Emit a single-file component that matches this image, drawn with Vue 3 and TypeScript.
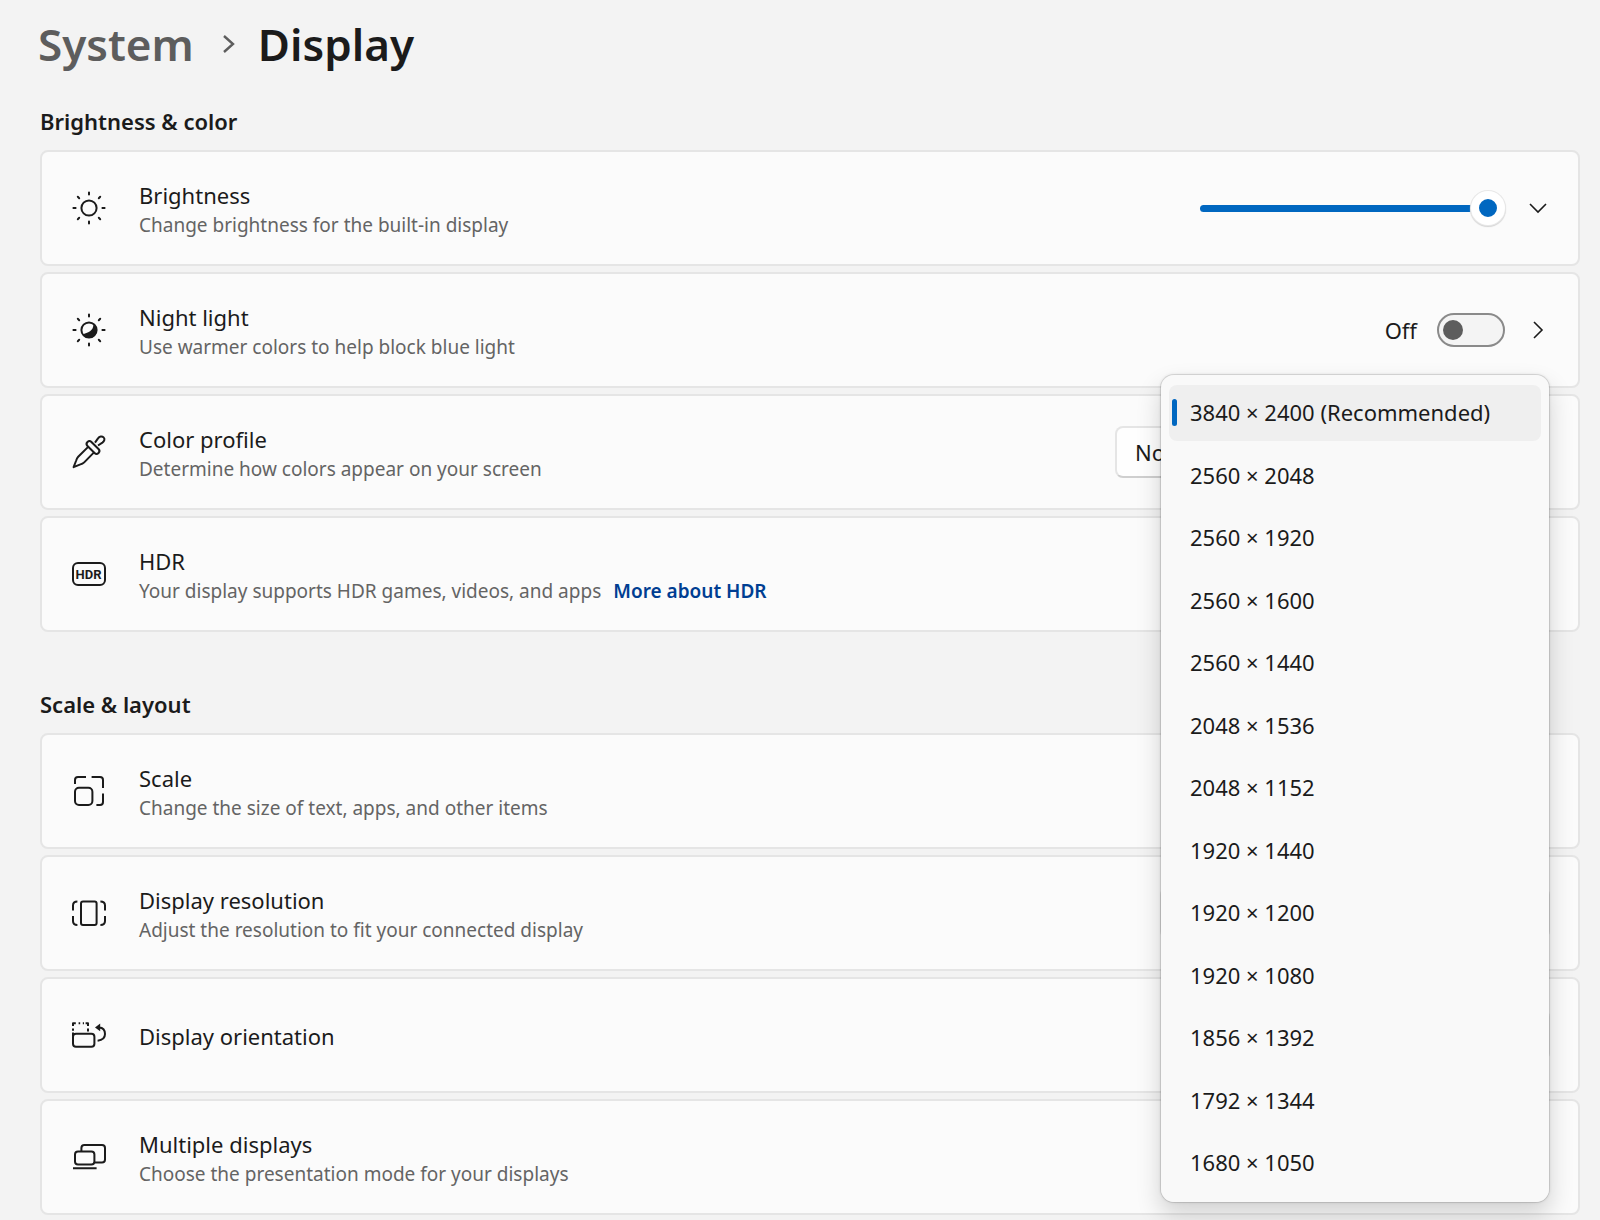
<script setup lang="ts">
import { ref } from 'vue'

type IconName = 'sun' | 'night' | 'picker' | 'hdr' | 'scale' | 'resolution' | 'orientation' | 'displays'

interface Row {
  id: string
  icon: IconName
  title: string
  text?: string
  link?: string
}

interface Section {
  title: string
  rows: Row[]
}

const sections: Section[] = [
  {
    title: 'Brightness & color',
    rows: [
      { id: 'brightness', icon: 'sun', title: 'Brightness', text: 'Change brightness for the built-in display' },
      { id: 'night', icon: 'night', title: 'Night light', text: 'Use warmer colors to help block blue light' },
      { id: 'profile', icon: 'picker', title: 'Color profile', text: 'Determine how colors appear on your screen' },
      { id: 'hdr', icon: 'hdr', title: 'HDR', text: 'Your display supports HDR games, videos, and apps', link: 'More about HDR' },
    ],
  },
  {
    title: 'Scale & layout',
    rows: [
      { id: 'scale', icon: 'scale', title: 'Scale', text: 'Change the size of text, apps, and other items' },
      { id: 'resolution', icon: 'resolution', title: 'Display resolution', text: 'Adjust the resolution to fit your connected display' },
      { id: 'orientation', icon: 'orientation', title: 'Display orientation' },
      { id: 'displays', icon: 'displays', title: 'Multiple displays', text: 'Choose the presentation mode for your displays' },
    ],
  },
]

const resolutions: string[] = [
  '3840 × 2400 (Recommended)',
  '2560 × 2048',
  '2560 × 1920',
  '2560 × 1600',
  '2560 × 1440',
  '2048 × 1536',
  '2048 × 1152',
  '1920 × 1440',
  '1920 × 1200',
  '1920 × 1080',
  '1856 × 1392',
  '1792 × 1344',
  '1680 × 1050',
]

const brightness = ref(100)
const nightLight = ref(false)
const resolution = ref(resolutions[0])
</script>

<template>
  <main class="page">
    <h1 class="crumbs">
      <a class="crumb-parent" href="#system">System</a>
      <svg class="crumb-sep" viewBox="0 0 14 20" aria-hidden="true"><path d="M2 2l9 8-9 8" /></svg>
      <span>Display</span>
    </h1>

    <section v-for="section in sections" :key="section.title" class="section">
      <h2 class="section-title">{{ section.title }}</h2>
      <div class="cards">
        <div v-for="row in section.rows" :key="row.id" class="card">
          <svg class="icon" viewBox="0 0 34 34" aria-hidden="true">
            <template v-if="row.icon === 'sun' || row.icon === 'night'">
              <circle cx="17" cy="17" r="7.6" />
              <path
                class="rays"
                d="M17 1.400v2.200M17 30.400v2.200M1.400 17h2.200M30.400 17h2.200M5.800 5.800l1.400 1.400M26.800 26.800l1.400 1.400M5.800 28.200l1.400-1.400M26.800 7.200l1.400-1.400"
              />
              <path
                v-if="row.icon === 'night'"
                class="solid"
                d="M21.4 10.6C21.6 14.4 20.4 16.8 18 18.2C15.8 19.6 13 20.6 10.6 21.4A7.8 7.8 0 1 0 21.4 10.6z"
              />
            </template>
            <template v-else-if="row.icon === 'picker'">
              <path d="M16.4 11.6L6.2 21.8C5 23 4.6 24 4 26L1.6 32.2L7.8 29.6C10 29 11 28.6 12.2 27.4L22 17.4" />
              <rect x="-7.8" y="-2.8" width="15.6" height="5.6" rx="2.8" transform="translate(21 12.5) rotate(45)" />
              <path d="M23 7.6L26 3.4C27.4 1.2 30 .8 31.6 2.4S32.4 6.2 30.4 7.6L26 10.5" />
            </template>
            <template v-else-if="row.icon === 'hdr'">
              <rect x="1" y="6" width="32" height="22" rx="5" />
              <text class="icon-text" x="16.600" y="21.700" text-anchor="middle">HDR</text>
            </template>
            <template v-else-if="row.icon === 'scale'">
              <rect x="3" y="13.7" width="17.4" height="17.3" rx="4" />
              <path d="M3 10V6a3 3 0 0 1 3-3h8M19.6 3H28a3 3 0 0 1 3 3v8M31 19.6V28a3 3 0 0 1-3 3h-3.6" />
            </template>
            <template v-else-if="row.icon === 'resolution'">
              <rect x="9" y="5.5" width="15.6" height="23.5" rx="2" />
              <path d="M5.4 5.5C2.4 5.5 1 7 1 9.600V14.400M1 20v5c0 2.600 1.400 4 4.400 4M28.400 5.500C31.600 5.500 33 7 33 9.600V14.400M33 20v5c0 2.600-1.400 4-4.600 4" />
            </template>
            <template v-else-if="row.icon === 'orientation'">
              <rect x="1" y="15.700" width="21.400" height="13" rx="3" />
              <path d="M1 8V5.300H3.800M6.600 5.300H8.200M10.800 5.300H12M13.600 5.300H16V8M1 10.400V12.800M16 10.400V13.600M1 14.600V18M25.600 22.700C30.200 22.200 33 19.600 33 16C33 12.200 31 9.600 27 9.400" />
              <path class="solid" d="M23 9.400L28.200 5.600V13.200z" />
            </template>
            <template v-else>
              <rect x="3" y="11.400" width="19.400" height="13" rx="3" />
              <path d="M9.400 11V8a3 3 0 0 1 3-3H30a3 3 0 0 1 3 3V19.400a3 3 0 0 1-3 3H23M1 28.200H24.600" />
            </template>
          </svg>

          <div class="body">
            <div class="title">{{ row.title }}</div>
            <div v-if="row.text" class="text">
              {{ row.text }}<a v-if="row.link" class="link" href="#hdr">{{ row.link }}</a>
            </div>
          </div>

          <div v-if="row.id === 'brightness'" class="control">
            <input v-model="brightness" class="slider" type="range" min="0" max="100" aria-label="Brightness" />
            <button class="chevron" type="button" aria-label="Expand brightness">
              <svg viewBox="0 0 24 24" aria-hidden="true"><path d="M4 8l8 8 8-8" /></svg>
            </button>
          </div>

          <div v-else-if="row.id === 'night'" class="control">
            <label class="toggle-label">Off<input v-model="nightLight" class="toggle" type="checkbox" role="switch" /></label>
            <button class="chevron" type="button" aria-label="Night light settings">
              <svg viewBox="0 0 24 24" aria-hidden="true"><path d="M8 4l8 8-8 8" /></svg>
            </button>
          </div>

          <div v-else-if="row.id === 'profile'" class="control">
            <select class="select" aria-label="Color profile">
              <option>None</option>
            </select>
            <button class="chevron" type="button" aria-label="Expand color profile">
              <svg viewBox="0 0 24 24" aria-hidden="true"><path d="M4 8l8 8 8-8" /></svg>
            </button>
          </div>

          <div v-else-if="row.id === 'resolution'" class="control">
            <button class="select" type="button" aria-haspopup="listbox" aria-label="Display resolution"></button>
            <ul class="menu" role="listbox" aria-label="Display resolution">
              <li v-for="item in resolutions" :key="item">
                <button
                  class="option"
                  :class="{ selected: item === resolution }"
                  type="button"
                  role="option"
                  :aria-selected="item === resolution"
                  @click="resolution = item"
                >
                  {{ item }}
                </button>
              </li>
            </ul>
          </div>

          <div v-else-if="row.id === 'orientation'" class="control">
            <select class="select select-small" aria-label="Display orientation"></select>
          </div>
        </div>
      </div>
    </section>
  </main>
</template>

<style>
body {
  margin: 0;
  background: #f3f3f3;
}
</style>

<style scoped>
.page {
  padding: 12px 20px 5px 40px;
  color: #1b1b1b;
  font-family: 'Noto Sans', 'Open Sans', sans-serif;
  font-size: 22px;
}

.crumbs {
  display: flex;
  align-items: center;
  margin: 0 0 0 -2px;
  font-size: 44px;
  font-weight: 600;
  line-height: 64px;
}

.crumb-parent {
  color: #5d5d5d;
  text-decoration: none;
}

.crumb-sep {
  width: 14px;
  height: 20px;
  margin: 0 22px 0 28px;
  fill: none;
  stroke: #5d5d5d;
  stroke-width: 2.4;
}

.section {
  padding-top: 28px;
}

.section + .section {
  padding-top: 55px;
}

.section-title {
  margin: 0 0 12px;
  font-size: 22px;
  font-weight: 600;
  line-height: 34px;
}

.cards {
  display: grid;
  gap: 6px;
}

.card {
  box-sizing: border-box;
  display: flex;
  align-items: center;
  gap: 33px;
  min-height: 116px;
  padding: 0 28px 0 30px;
  background: #fbfbfb;
  border: 2px solid #e5e5e5;
  border-radius: 8px;
}

.icon {
  flex: none;
  width: 34px;
  height: 34px;
  fill: none;
  stroke: #1b1b1b;
  stroke-width: 2;
  stroke-linejoin: round;
}

.icon .rays {
  stroke-linecap: round;
}

.icon .solid {
  fill: #1b1b1b;
  stroke: none;
}

.icon-text {
  fill: #1b1b1b;
  stroke: none;
  font-family: Roboto, sans-serif;
  font-size: 13px;
  font-weight: 700;
}

.body {
  flex: 1;
  min-width: 0;
  padding-top: 2px;
}

.title {
  line-height: 32px;
}

.text {
  color: #646464;
  font-size: 19px;
  line-height: 28px;
}

.link {
  margin-left: 12px;
  color: #003e92;
  font-weight: 600;
  text-decoration: none;
}

.control {
  position: relative;
  display: flex;
  align-items: center;
  gap: 21px;
}

.slider {
  width: 305px;
  height: 34px;
  margin: 0;
  appearance: none;
  background: transparent;
}

.slider::-webkit-slider-runnable-track {
  height: 7px;
  background: #0067c0;
  border-radius: 4px;
}

.slider::-webkit-slider-thumb {
  box-sizing: border-box;
  width: 34px;
  height: 34px;
  margin-top: -14px;
  appearance: none;
  background: #0067c0;
  border: 8px solid #fff;
  border-radius: 50%;
  box-shadow: 0 0 0 1px #e8e8e8, 0 1px 1px 1px #d4d4d4;
}

.chevron {
  width: 24px;
  height: 24px;
  padding: 0;
  background: none;
  border: 0;
}

.chevron svg {
  display: block;
  fill: none;
  stroke: #1b1b1b;
  stroke-width: 1.6;
}

.toggle-label {
  display: flex;
  align-items: center;
  gap: 20px;
}

.toggle {
  box-sizing: border-box;
  width: 68px;
  height: 34px;
  margin: 0;
  padding: 5px 4px;
  appearance: none;
  background: #f4f4f4;
  border: 2px solid #8a8a8a;
  border-radius: 17px;
}

.toggle::before {
  display: block;
  width: 20px;
  height: 20px;
  background: #5d5d5d;
  border-radius: 50%;
  content: '';
}

.toggle:checked::before {
  margin-left: auto;
}

.select {
  box-sizing: border-box;
  width: 390px;
  height: 52px;
  padding: 0 18px;
  appearance: none;
  background: #fefefe;
  border: 2px solid #e5e5e5;
  border-bottom-color: #cfcfcf;
  border-radius: 8px;
  color: #1b1b1b;
  font: inherit;
}

.select-small {
  width: 220px;
}

.menu {
  position: absolute;
  z-index: 2;
  inset: -513px 0 -264px 0;
  box-sizing: border-box;
  display: flex;
  flex-direction: column;
  justify-content: space-between;
  margin: 0;
  padding: 10px 8px 11px;
  list-style: none;
  background: #f9f9f9;
  background-clip: padding-box;
  border: 1px solid rgb(0 0 0 / 10%);
  border-radius: 14px;
  box-shadow: 0 12px 24px rgb(0 0 0 / 16%), 0 0 3px rgb(0 0 0 / 8%);
}

.option {
  position: relative;
  display: block;
  width: 100%;
  height: 56px;
  padding: 0 21px 2px;
  background: none;
  border: 0;
  border-radius: 8px;
  color: #1b1b1b;
  font: inherit;
  text-align: left;
}

.option.selected {
  background: #efefef;
}

.option.selected::before {
  position: absolute;
  top: 14px;
  left: 3px;
  width: 5px;
  height: 27px;
  background: #0067c0;
  border-radius: 3px;
  content: '';
}
</style>
